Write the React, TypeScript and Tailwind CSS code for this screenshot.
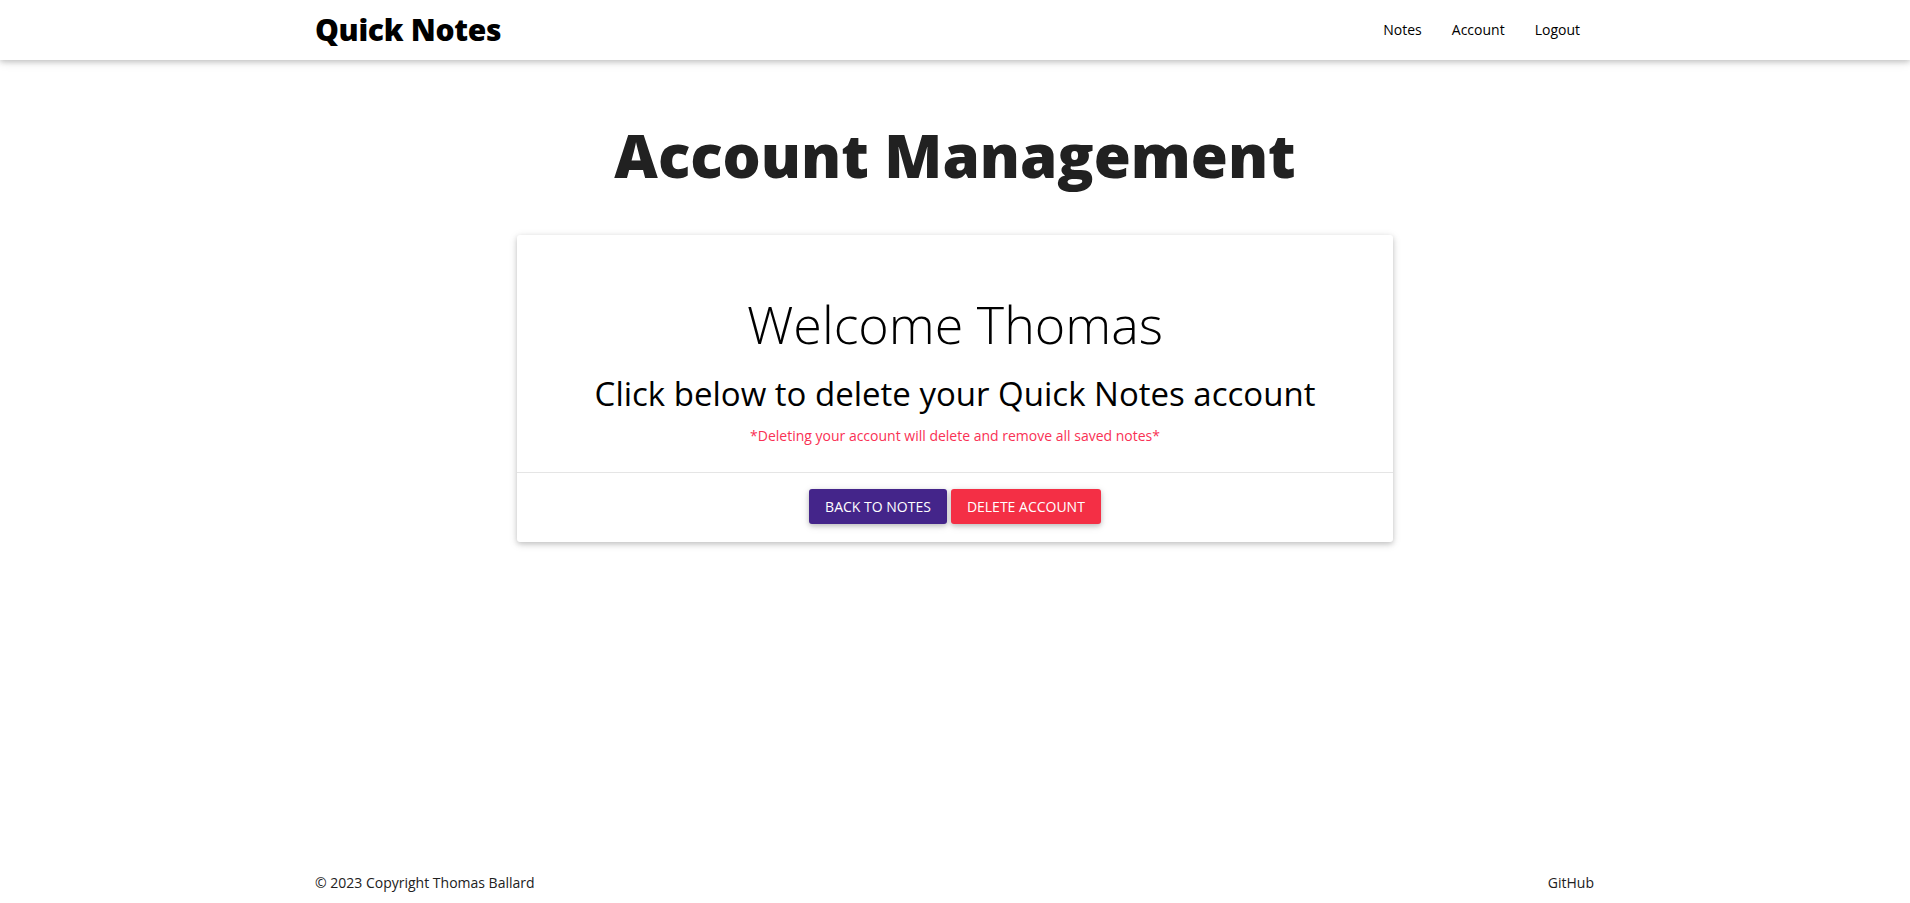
export default function App() {
  return (
    <div className="min-h-screen flex flex-col bg-white text-black" style={{ fontFamily: '"Open Sans", "Noto Sans", sans-serif' }}>
      {/* Navbar */}
      <nav className="h-[60px] bg-white shadow-[0_2px_5px_0_rgba(0,0,0,0.16),0_2px_10px_0_rgba(0,0,0,0.12)] relative z-10">
        <div className="w-[1280px] mx-auto h-full flex items-center justify-between">
          <a href="#" className="text-[30px] font-extrabold leading-none tracking-[-0.3px] -mt-[1px]">
            Quick Notes
          </a>
          <ul className="flex items-center text-[14px] -mt-[2px]">
            <li><a href="#" className="block px-[15px] py-2">Notes</a></li>
            <li><a href="#" className="block px-[15px] py-2">Account</a></li>
            <li><a href="#" className="block px-[15px] py-2">Logout</a></li>
          </ul>
        </div>
      </nav>

      {/* Main */}
      <main className="flex-1 flex flex-col items-center">
        <h1 className="mt-[59px] text-[60px] leading-[1.2] font-extrabold text-[#212121]">
          Account Management
        </h1>

        <div className="mt-[44px] w-[876px] bg-white rounded-[3px] shadow-[0_2px_5px_0_rgba(0,0,0,0.16),0_2px_10px_0_rgba(0,0,0,0.12)]">
          <div className="pt-[58px] pb-[26px] px-6 text-center">
            <h2 className="text-[52px] leading-[1.2] font-light">Welcome Thomas</h2>
            <h3 className="mt-[19px] text-[33px] leading-[1.2] font-normal">
              Click below to delete your Quick Notes account
            </h3>
            <p className="mt-[11px] text-[14px] leading-[1.5] text-[#f93154]">
              *Deleting your account will delete and remove all saved notes*
            </p>
          </div>
          <div className="border-t border-[#e5e5e5] pt-[16px] pb-[18px] flex justify-center gap-1">
            <button className="h-[35px] px-[16px] rounded-[3px] bg-[#44258a] text-white text-[14px] font-medium uppercase shadow-[0_2px_5px_0_rgba(0,0,0,0.2),0_2px_10px_0_rgba(0,0,0,0.1)]">
              Back to notes
            </button>
            <button className="h-[35px] px-[16px] rounded-[3px] bg-[#f42f45] text-white text-[14px] font-medium uppercase shadow-[0_2px_5px_0_rgba(0,0,0,0.2),0_2px_10px_0_rgba(0,0,0,0.1)]">
              Delete account
            </button>
          </div>
        </div>
      </main>

      {/* Footer */}
      <footer className="h-[42px]">
        <div className="w-[1280px] mx-auto h-full flex items-center justify-between text-[14px] text-[#212121]">
          <span>© 2023 Copyright Thomas Ballard</span>
          <a href="#" className="pr-[1px]">GitHub</a>
        </div>
      </footer>
    </div>
  )
}
